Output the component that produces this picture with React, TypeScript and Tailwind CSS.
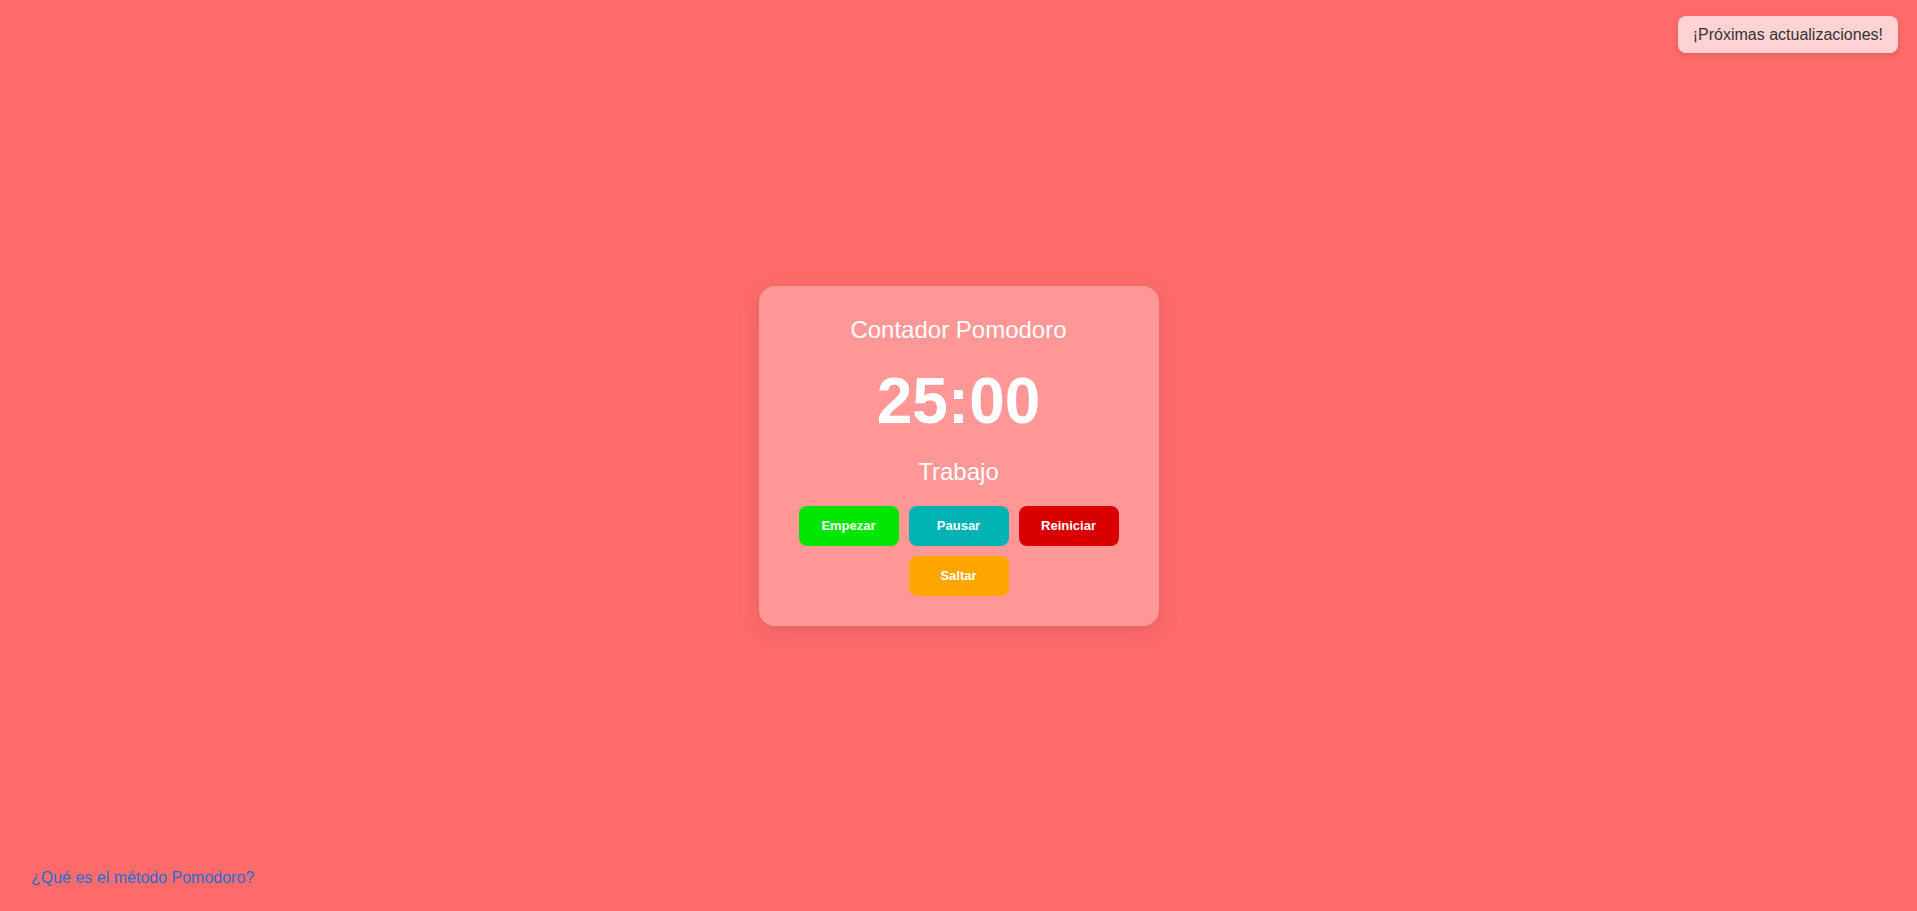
import { useEffect, useState } from "react"

type Mode = "Trabajo" | "Descanso"

const WORK = 25 * 60
const BREAK = 5 * 60

function fmt(s: number) {
  const m = Math.floor(s / 60)
  const r = s % 60
  return `${String(m).padStart(2, "0")}:${String(r).padStart(2, "0")}`
}

export default function App() {
  const [mode, setMode] = useState<Mode>("Trabajo")
  const [left, setLeft] = useState(WORK)
  const [running, setRunning] = useState(false)

  useEffect(() => {
    if (!running) return
    const id = setInterval(() => setLeft((l) => (l > 0 ? l - 1 : 0)), 1000)
    return () => clearInterval(id)
  }, [running])

  const skip = () => {
    const next = mode === "Trabajo" ? "Descanso" : "Trabajo"
    setMode(next)
    setLeft(next === "Trabajo" ? WORK : BREAK)
    setRunning(false)
  }

  const btn = "w-[100px] h-[40px] rounded-[8px] text-white text-[13px] font-bold cursor-pointer"

  return (
    <div className="relative min-h-screen bg-[#ff6b6b] flex items-center justify-center font-['Liberation_Sans',Arial,sans-serif]">
      <button className="absolute top-[16px] right-[19px] h-[37px] px-[15px] rounded-[8px] bg-[#ffd3d3] text-[#333] text-[16px] shadow-[0_2px_6px_rgba(0,0,0,0.12)]">
        ¡Próximas actualizaciones!
      </button>

      <div className="w-[400px] h-[340px] rounded-[16px] bg-[#ff9797] px-[30px] py-[30px] flex flex-col items-center gap-[20px] text-white shadow-[0_6px_24px_rgba(0,0,0,0.1)]">
        <h1 className="text-[24px] leading-[28px]">Contador Pomodoro</h1>
        <div className="text-[64px] leading-[74px] font-bold">{fmt(left)}</div>
        <div className="text-[24px] leading-[28px]">{mode}</div>
        <div className="flex flex-wrap justify-center gap-[10px] w-full">
          <button className={`${btn} bg-[#00e600]`} onClick={() => setRunning(true)}>
            Empezar
          </button>
          <button className={`${btn} bg-[#00b3b3]`} onClick={() => setRunning(false)}>
            Pausar
          </button>
          <button
            className={`${btn} bg-[#d90000]`}
            onClick={() => {
              setRunning(false)
              setLeft(mode === "Trabajo" ? WORK : BREAK)
            }}
          >
            Reiniciar
          </button>
          <button className={`${btn} bg-[#ffa500]`} onClick={skip}>
            Saltar
          </button>
        </div>
      </div>

      <a href="#" className="absolute left-[31px] bottom-[24px] text-[16px] leading-[18px] text-[#1e6fd9]">
        ¿Qué es el método Pomodoro?
      </a>
    </div>
  )
}
